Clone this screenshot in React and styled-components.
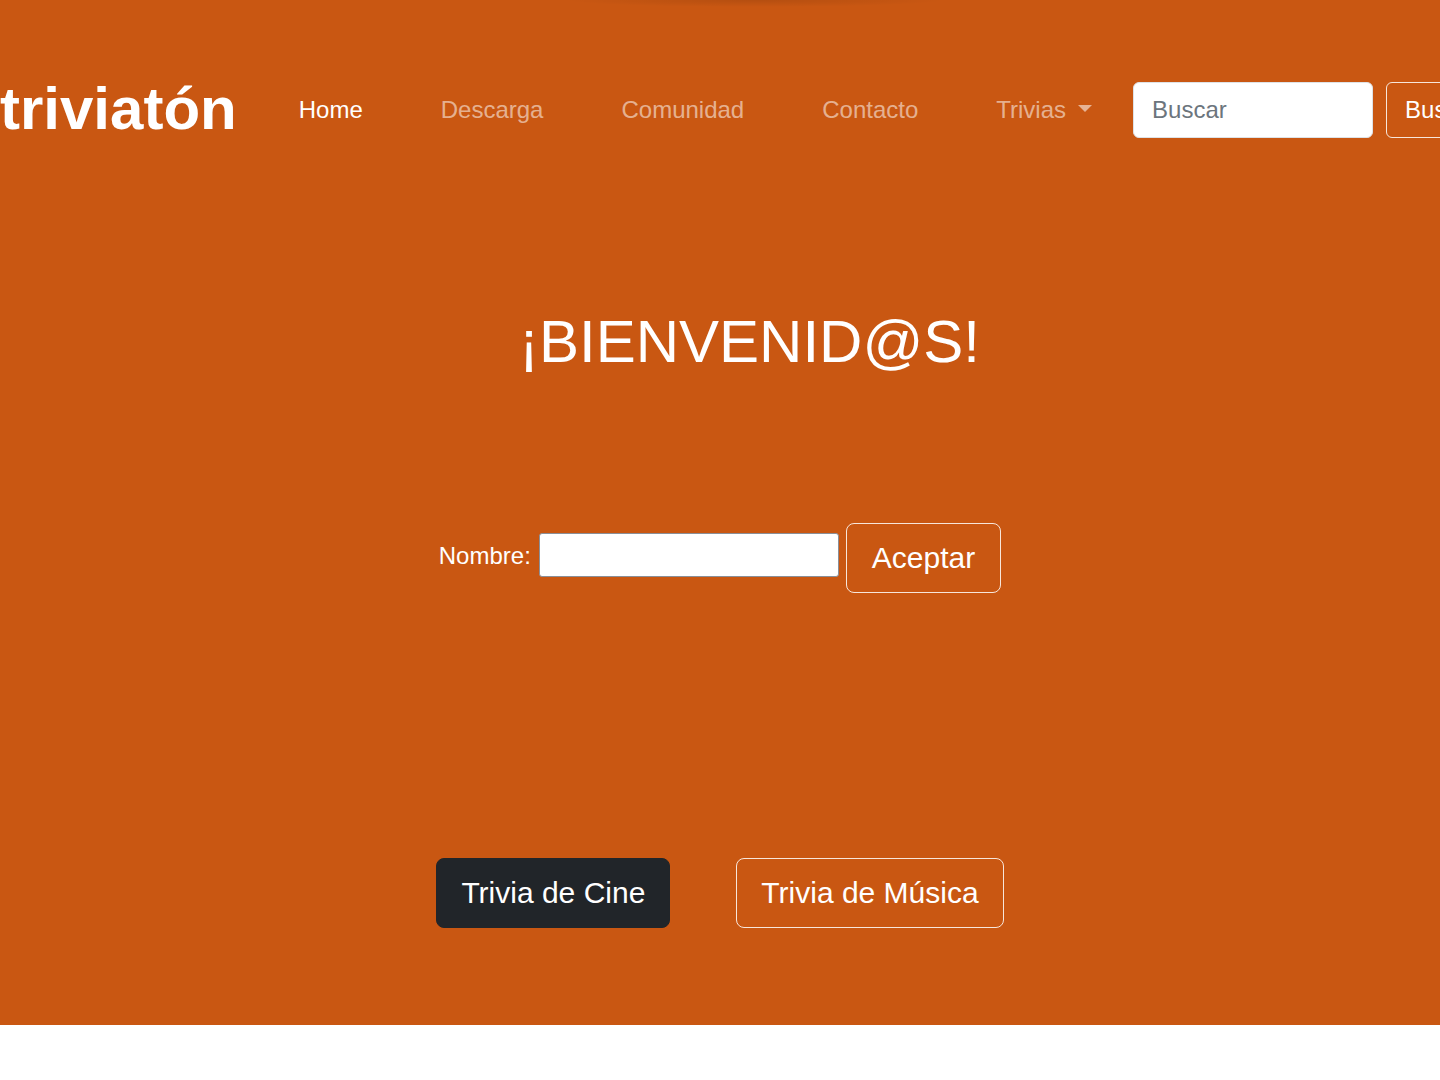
import React from "react";
import styled, { createGlobalStyle } from "styled-components";

const orange = "#c95712";
const dark = "#212529";
const faded = "rgba(255, 255, 255, 0.55)";

const GlobalStyle = createGlobalStyle`
	html, body {
		margin: 0;
		padding: 0;
		background: #fff;
		font-family: "Liberation Sans", Arial, sans-serif;
	}
	* {
		box-sizing: border-box;
	}
`;

const Page = styled("div")`
	width: 100%;
	overflow: hidden;
	background-color: ${orange};
	background-image: radial-gradient(ellipse 190px 7px at 755px 0, rgba(0, 0, 0, 0.1), transparent);
	padding-bottom: 97px;
`;

const Navbar = styled("nav")`
	display: flex;
	align-items: center;
	flex-wrap: nowrap;
	white-space: nowrap;
	padding-top: 82px;
	height: 138px;
`;

const Brand = styled("a")`
	font-size: 60px;
	font-weight: 700;
	line-height: 1;
	color: #fff;
	text-decoration: none;
	margin-top: -2px;
	margin-right: 23px;
	flex-shrink: 0;
`;

const NavList = styled("ul")`
	display: flex;
	align-items: center;
	list-style: none;
	margin: 0;
	padding: 0;
	flex-shrink: 0;
`;

const NavLink = styled("a")`
	display: flex;
	align-items: center;
	padding: 0 39px;
	font-size: 24px;
	line-height: 36px;
	color: ${(props) => (props.$active ? "#fff" : faded)};
	text-decoration: none;
`;

const Caret = styled("span")`
	display: inline-block;
	margin-left: 12px;
	width: 0;
	height: 0;
	border-top: 7px solid ${faded};
	border-left: 7px solid transparent;
	border-right: 7px solid transparent;
	margin-top: -4px;
`;

const SearchForm = styled("form")`
	display: flex;
	align-items: center;
	gap: 13px;
	margin-left: 2px;
	flex-shrink: 0;
`;

const SearchInput = styled("input")`
	width: 240px;
	height: 56px;
	padding: 0 18px;
	font-family: inherit;
	font-size: 24px;
	color: ${dark};
	background: #fff;
	border: 1px solid #dee2e6;
	border-radius: 6px;
	outline: none;
	&::placeholder {
		color: #6c757d;
	}
`;

const OutlineButton = styled("button")`
	height: ${(props) => props.$height || "56px"};
	padding: 0 ${(props) => props.$pad || "18px"};
	font-family: inherit;
	font-size: ${(props) => props.$size || "24px"};
	color: #fff;
	background: transparent;
	border: 1px solid rgba(255, 255, 255, 0.85);
	border-radius: ${(props) => props.$radius || "6px"};
	white-space: nowrap;
	flex-shrink: 0;
	cursor: pointer;
`;

const DarkButton = styled(OutlineButton)`
	background: ${dark};
	border-color: ${dark};
`;

const Main = styled("main")`
	display: flex;
	flex-direction: column;
	align-items: center;
`;

const Title = styled("h1")`
	margin: 168px 0 0;
	padding-left: 59px;
	font-size: 60px;
	font-weight: 400;
	line-height: 72px;
	color: #fff;
`;

const NameRow = styled("form")`
	display: flex;
	align-items: center;
	margin-top: 145px;
`;

const Label = styled("label")`
	font-size: 24px;
	color: #fff;
	margin-right: 8px;
	margin-top: -4px;
`;

const NameInput = styled("input")`
	width: 300px;
	height: 44px;
	padding: 0 8px;
	font-family: inherit;
	font-size: 20px;
	background: #fff;
	border: 1px solid #8a8f98;
	border-radius: 3px;
	outline: none;
	margin-right: 7px;
	margin-top: -6px;
`;

const TriviaRow = styled("div")`
	display: flex;
	gap: 66px;
	margin-top: 265px;
`;

const App = () => {
	return (
		<Page>
			<GlobalStyle />
			<Navbar>
				<Brand href="#">triviatón</Brand>
				<NavList>
					<li>
						<NavLink $active href="#">
							Home
						</NavLink>
					</li>
					<li>
						<NavLink href="#">Descarga</NavLink>
					</li>
					<li>
						<NavLink href="#">Comunidad</NavLink>
					</li>
					<li>
						<NavLink href="#">Contacto</NavLink>
					</li>
					<li>
						<NavLink href="#">
							Trivias
							<Caret />
						</NavLink>
					</li>
				</NavList>
				<SearchForm onSubmit={(e) => e.preventDefault()}>
					<SearchInput type="search" placeholder="Buscar" />
					<OutlineButton type="submit">Buscar</OutlineButton>
				</SearchForm>
			</Navbar>
			<Main>
				<Title>¡BIENVENID@S!</Title>
				<NameRow onSubmit={(e) => e.preventDefault()}>
					<Label htmlFor="nombre">Nombre:</Label>
					<NameInput id="nombre" type="text" />
					<OutlineButton type="submit" $height="70px" $pad="25px" $size="30px" $radius="8px">
						Aceptar
					</OutlineButton>
				</NameRow>
				<TriviaRow>
					<DarkButton $height="70px" $pad="24px" $size="30px" $radius="8px">
						Trivia de Cine
					</DarkButton>
					<OutlineButton $height="70px" $pad="24px" $size="30px" $radius="8px">
						Trivia de Música
					</OutlineButton>
				</TriviaRow>
			</Main>
		</Page>
	);
};

export default App;
